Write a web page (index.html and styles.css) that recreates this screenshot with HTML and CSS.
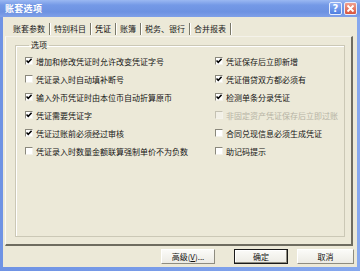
FILE: index.html
```html
<!DOCTYPE html>
<html lang="zh">
<head>
<meta charset="utf-8">
<title>账套选项</title>
<link rel="stylesheet" href="styles.css">
</head>
<body>
<div class="window">
  <div class="titlebar">
    <span class="title">账套选项</span>
    <span class="tbtn help">?</span>
    <span class="tbtn close">
      <svg width="9" height="9" viewBox="0 0 9 9"><path d="M1.5 1.5 L7.5 7.5 M7.5 1.5 L1.5 7.5" stroke="#fff" stroke-width="1.8"/></svg>
    </span>
  </div>
  <div class="client">
    <div class="tabs">
      <span class="tab">账套参数</span>
      <span class="tab">特别科目</span>
      <span class="tab active">凭证</span>
      <span class="tab">账簿</span>
      <span class="tab">税务、银行</span>
      <span class="tab">合并报表</span>
    </div>
    <div class="panel">
      <fieldset class="group">
        <legend>选项</legend>
        <div class="opts">
          <label class="opt"><span class="cb"><svg width="6" height="6" viewBox="0 0 6 6"><path d="M0.5 2.5 L2.2 4.3 L5.6 0.8" fill="none" stroke="#000" stroke-width="1.5"/></svg></span>增加和修改凭证时允许改变凭证字号</label>
          <label class="opt"><span class="cb"><svg width="6" height="6" viewBox="0 0 6 6"><path d="M0.5 2.5 L2.2 4.3 L5.6 0.8" fill="none" stroke="#000" stroke-width="1.5"/></svg></span>凭证保存后立即新增</label>
          <label class="opt"><span class="cb"></span>凭证录入时自动填补断号</label>
          <label class="opt"><span class="cb"><svg width="6" height="6" viewBox="0 0 6 6"><path d="M0.5 2.5 L2.2 4.3 L5.6 0.8" fill="none" stroke="#000" stroke-width="1.5"/></svg></span>凭证借贷双方都必须有</label>
          <label class="opt"><span class="cb"><svg width="6" height="6" viewBox="0 0 6 6"><path d="M0.5 2.5 L2.2 4.3 L5.6 0.8" fill="none" stroke="#000" stroke-width="1.5"/></svg></span>输入外币凭证时由本位币自动折算原币</label>
          <label class="opt"><span class="cb"><svg width="6" height="6" viewBox="0 0 6 6"><path d="M0.5 2.5 L2.2 4.3 L5.6 0.8" fill="none" stroke="#000" stroke-width="1.5"/></svg></span>检测单条分录凭证</label>
          <label class="opt"><span class="cb"><svg width="6" height="6" viewBox="0 0 6 6"><path d="M0.5 2.5 L2.2 4.3 L5.6 0.8" fill="none" stroke="#000" stroke-width="1.5"/></svg></span>凭证需要凭证字</label>
          <label class="opt disabled"><span class="cb"></span>非固定资产凭证保存后立即过账</label>
          <label class="opt"><span class="cb"><svg width="6" height="6" viewBox="0 0 6 6"><path d="M0.5 2.5 L2.2 4.3 L5.6 0.8" fill="none" stroke="#000" stroke-width="1.5"/></svg></span>凭证过账前必须经过审核</label>
          <label class="opt"><span class="cb"></span>合同兑现信息必须生成凭证</label>
          <label class="opt"><span class="cb"></span>凭证录入时数量金额联算强制单价不为负数</label>
          <label class="opt"><span class="cb"></span>助记码提示</label>
        </div>
      </fieldset>
    </div>
    <div class="buttons">
      <span class="btn adv">高级(<u>V</u>)...</span>
      <span class="btn default">确定</span>
      <span class="btn cancel">取消</span>
    </div>
  </div>
</div>
</body>
</html>
```
FILE: styles.css
```css
html, body {
  margin: 0;
  padding: 0;
}
body {
  width: 360px;
  height: 271px;
  overflow: hidden;
  font-family: "Noto Sans CJK SC", "Noto Sans", sans-serif;
  font-size: 8px;
  color: #111;
}
.window {
  width: 360px;
  height: 271px;
  box-sizing: border-box;
  background: linear-gradient(90deg, #6f93e4, #86a8ee);
  display: flex;
  flex-direction: column;
  padding: 0 3px 4px 3px;
}
.titlebar {
  height: 17px;
  margin: 0 -3px;
  padding: 0 3px 0 5px;
  display: flex;
  align-items: center;
  background: linear-gradient(180deg, #9ab8f2 0%, #7499e6 30%, #6d92e2 70%, #7fa0e8 100%);
}
.title {
  flex: 1;
  color: #fff;
  font-size: 9px;
  font-weight: bold;
  letter-spacing: 0.3px;
}
.tbtn {
  width: 13px;
  height: 13px;
  box-sizing: border-box;
  border: 1px solid #e8eefc;
  border-radius: 2px;
  display: flex;
  align-items: center;
  justify-content: center;
  color: #fff;
  font-family: "DejaVu Sans", sans-serif;
  font-weight: bold;
  font-size: 10px;
  line-height: 1;
  margin-left: 2px;
}
.help {
  background: linear-gradient(180deg, #8fb0f5, #4f7fe0);
}
.close {
  background: linear-gradient(180deg, #f0a090, #d8553d);
}
.client {
  flex: 1;
  background: #ece9d8;
  display: flex;
  flex-direction: column;
}
.tabs {
  height: 19px;
  display: flex;
  align-items: flex-start;
  padding-left: 6px;
}
.tab {
  margin-top: 6px;
  height: 12px;
  line-height: 12px;
  padding: 0 4px;
  border-right: 1px solid #7a7868;
  box-shadow: 1px 0 0 #fff;
  color: #1a1a1a;
}
.tab.active {
  color: #000;
}
.panel {
  flex: 1;
  margin: 0 4px 0 2px;
  border-left: 1px solid #fbfaf5;
  border-top: 1px solid #f4f2ea;
  border-right: 2px solid #6e6c60;
  border-bottom: 2px solid #6e6c60;
  display: flex;
  flex-direction: column;
  padding: 3px 6px 7px 9px;
}
.group {
  flex: 1;
  margin: 0;
  padding: 2px 0 0 9px;
  border: 1px solid #cbc8b6;
  box-shadow: inset 1px 1px 0 #fff;
}
.group legend {
  padding: 0 2px;
  margin-left: 4px;
  line-height: 10px;
  color: #111;
}
.opts {
  display: grid;
  grid-template-columns: 190px 1fr;
  grid-auto-rows: 18px;
}
.opt {
  display: flex;
  align-items: center;
  gap: 3px;
  white-space: nowrap;
  color: #141414;
}
.cb {
  width: 8px;
  height: 8px;
  box-sizing: border-box;
  background: #fff;
  border-top: 1px solid #8a887c;
  border-left: 1px solid #8a887c;
  border-right: 1px solid #f4f2ea;
  border-bottom: 1px solid #f4f2ea;
  display: flex;
  align-items: center;
  justify-content: center;
  flex: none;
}
.cb svg {
  display: block;
}
.opt.disabled {
  color: #b6b3a4;
}
.opt.disabled .cb {
  background: #f2f0e6;
  border-top-color: #c4c1b2;
  border-left-color: #c4c1b2;
}
.buttons {
  height: 21px;
  display: flex;
  align-items: center;
  justify-content: flex-end;
  padding-right: 3px;
  gap: 9px;
}
.btn {
  width: 54px;
  height: 15px;
  box-sizing: border-box;
  display: flex;
  align-items: center;
  justify-content: center;
  background: linear-gradient(180deg, #fbfbf8, #ecebe4);
  border: 1px solid #fff;
  border-right-color: #8e8c80;
  border-bottom-color: #8e8c80;
  color: #111;
}
.btn.adv {
  margin-right: 10px;
}
.btn.default {
  border: 1px solid #1a1a1a;
  box-shadow: inset -1px -1px 0 #8e8c80, inset 1px 1px 0 #fff;
}
.btn.cancel {
  width: 57px;
}
.btn u {
  text-decoration: underline;
}
```
